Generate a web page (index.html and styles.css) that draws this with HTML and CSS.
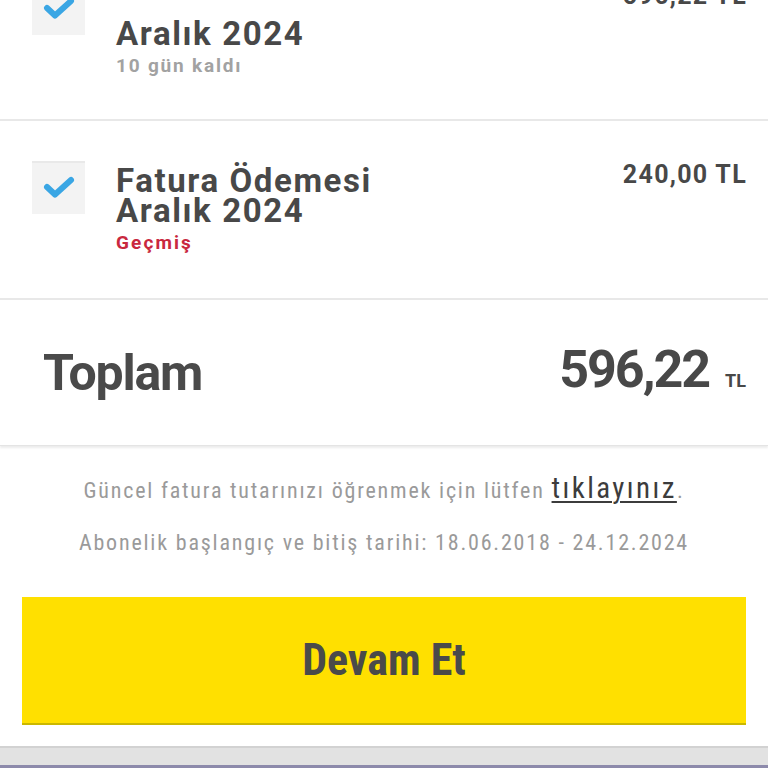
FILE: index.html
```html
<!DOCTYPE html>
<html lang="tr">
<head>
<meta charset="utf-8">
<link rel="stylesheet" href="styles.css">
</head>
<body>
<div class="screen">
  <div class="list">
    <div class="row row-first">
      <div class="check">
        <svg viewBox="0 0 53 53" width="53" height="53"><path d="M15 26 L23 33.5 L39 19" fill="none" stroke="#3aa6e4" stroke-width="6" stroke-linecap="round" stroke-linejoin="round"/></svg>
      </div>
      <div class="info">
        <div class="title">Aralık 2024</div>
        <div class="sub muted">10 gün kaldı</div>
      </div>
      <div class="amount">596,22 TL</div>
    </div>
    <div class="row">
      <div class="check">
        <svg viewBox="0 0 53 53" width="53" height="53"><path d="M15 26 L23 33.5 L39 19" fill="none" stroke="#3aa6e4" stroke-width="6" stroke-linecap="round" stroke-linejoin="round"/></svg>
      </div>
      <div class="info">
        <div class="title">Fatura Ödemesi<br>Aralık 2024</div>
        <div class="sub late">Geçmiş</div>
      </div>
      <div class="amount">240,00 TL</div>
    </div>
  </div>
  <div class="total">
    <div class="total-label">Toplam</div>
    <div class="total-value"><span class="total-num">596,22</span><span class="total-cur">TL</span></div>
  </div>
  <div class="notes">
    <p class="note">Güncel fatura tutarınızı öğrenmek için lütfen <a class="link" href="#">tıklayınız</a>.</p>
    <p class="note">Abonelik başlangıç ve bitiş tarihi: 18.06.2018 - 24.12.2024</p>
  </div>
  <div class="cta">
    <button class="btn">Devam Et</button>
  </div>
  <div class="navbar"></div>
</div>
</body>
</html>
```
FILE: styles.css
```css
html, body {
  margin: 0;
  padding: 0;
  background: #ffffff;
  overflow: hidden;
}
.screen {
  width: 768px;
  height: 768px;
  overflow: hidden;
  display: flex;
  flex-direction: column;
  font-family: Roboto, "Noto Sans", sans-serif;
  color: #4a4a4a;
}
.list {
  margin-top: -58px;
}
.row {
  display: flex;
  align-items: flex-start;
  padding: 40px 22px 0 32px;
  height: 137px;
  border-bottom: 2px solid #e8e8e8;
}
.check {
  width: 53px;
  height: 53px;
  flex: none;
  background: #f3f3f3;
  box-shadow: inset 0 2px 0 #e9e9e9;
}
.check svg {
  display: block;
}
.info {
  flex: 1;
  margin-left: 31px;
  margin-top: 5px;
}
.row-first .info {
  margin-top: 37px;
}
.title {
  font-size: 33px;
  line-height: 30px;
  font-weight: 700;
  letter-spacing: 1.6px;
  color: #484848;
}
.sub {
  font-size: 19px;
  font-weight: 700;
  letter-spacing: 1.8px;
  margin-top: 5px;
}
.muted { color: #a2a2a2; }
.late { color: #c9283e; letter-spacing: 2.1px; }
.amount {
  font-size: 25px;
  font-weight: 700;
  letter-spacing: 1.3px;
  color: #484848;
  margin-top: -1px;
  margin-right: -1px;
}
.total {
  display: flex;
  align-items: center;
  justify-content: space-between;
  height: 145px;
  padding: 0 22px 0 43px;
  box-shadow: 0 2px 2px rgba(0,0,0,0.08);
  border-bottom: 1px solid #e4e4e4;
  position: relative;
}
.total-label {
  font-size: 50px;
  font-weight: 700;
  letter-spacing: -1.2px;
  color: #4a4a4a;
}
.total-value {
  display: flex;
  align-items: baseline;
  gap: 16px;
  margin-top: -6px;
}
.total-num {
  font-size: 52px;
  font-weight: 700;
  letter-spacing: -2px;
  color: #484848;
}
.total-cur {
  font-size: 18px;
  font-weight: 700;
  color: #484848;
}
.notes {
  padding-top: 27px;
  text-align: center;
}
.note {
  margin: 0 0 22px;
  font-family: "Roboto Condensed", "Liberation Sans Narrow", "DejaVu Sans Condensed", Roboto, sans-serif;
  font-size: 22px;
  line-height: 30px;
  letter-spacing: 1.8px;
  color: #9a9a9a;
}
.link {
  font-size: 29px;
  letter-spacing: 2.4px;
  color: #3c3c3c;
  text-decoration: underline;
  text-decoration-thickness: 2px;
  text-underline-offset: 3px;
}
.cta {
  padding: 0 22px;
  margin-top: 17px;
}
.btn {
  display: block;
  width: 100%;
  height: 128px;
  border: none;
  border-bottom: 2px solid #cbb800;
  background: #ffe000;
  font-family: "Roboto Condensed", "Liberation Sans Narrow", Roboto, sans-serif;
  font-size: 44px;
  font-weight: 700;
  color: #4a4a4a;
  padding: 0;
}
.navbar {
  margin-top: auto;
  height: 17px;
  background: #e2e2e2;
  border-top: 2px solid #d2d2d2;
  border-bottom: 3px solid #8d8aab;
}
```
